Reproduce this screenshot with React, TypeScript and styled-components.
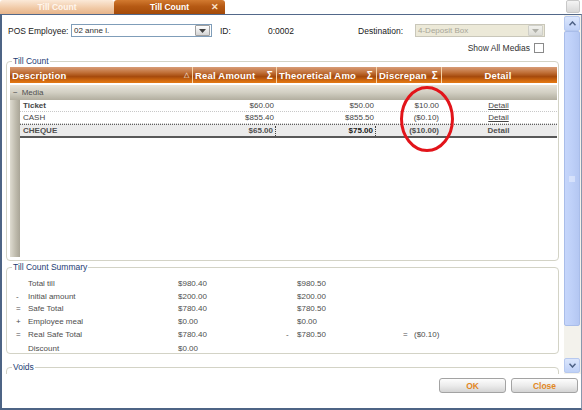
import React from "react";
import styled, { createGlobalStyle } from "styled-components";

const Global = createGlobalStyle`
  html, body {
    margin: 0;
    padding: 0;
    background: #ffffff;
    overflow: hidden;
  }
  body {
    font-family: "Liberation Sans", Tahoma, Arial, sans-serif;
    font-size: 8px;
    color: #303030;
  }
`;

const Page = styled.div`
  width: 582px;
  height: 410px;
  display: flex;
  flex-direction: column;
  background: #ffffff;
  position: relative;
`;

const TabBar = styled.div`
  height: 14px;
  display: flex;
  align-items: stretch;
  position: relative;
`;

interface TabProps {
  $active?: boolean;
}
const Tab = styled.div<TabProps>`
  width: ${(p) => (p.$active ? 111 : 114)}px;
  display: flex;
  align-items: center;
  justify-content: center;
  position: relative;
  color: ${(p) => (p.$active ? "#ffffff" : "#fff6ee")};
  font-weight: bold;
  font-size: 8.5px;
  border-radius: 3px 3px 0 0;
  background: ${(p) =>
    p.$active
      ? "linear-gradient(#d27a30 0%, #b65a14 45%, #a44a08 100%)"
      : "linear-gradient(#fbe9d8 0%, #f0c8a4 60%, #e7b48a 100%)"};
`;

const TabClose = styled.span`
  position: absolute;
  right: 6px;
  top: 2px;
  font-size: 9px;
  color: #fbe2c8;
`;

const CornerButton = styled.div`
  position: absolute;
  right: 2px;
  top: 0;
  width: 12px;
  height: 11px;
  border: 1px solid #c8c8c8;
  border-radius: 2px;
  background: linear-gradient(#f4f4f4, #d8d8d8);
`;

const Window = styled.div`
  flex: 1;
  display: flex;
  flex-direction: column;
  border-top: 1px solid #52688a;
  border-left: 2px solid #4d6485;
  border-right: 1px solid #8797ad;
  border-bottom: 2px solid #4d6485;
  min-height: 0;
`;

const Body = styled.div`
  height: 359px;
  display: flex;
`;

const Content = styled.div`
  flex: 1;
  overflow: hidden;
  display: flex;
  flex-direction: column;
`;

const TopRow = styled.div`
  margin-top: 9px;
  height: 15px;
  display: flex;
  align-items: center;
  padding-left: 6px;
`;

const Label = styled.span<{ $w?: number; $right?: boolean }>`
  width: ${(p) => (p.$w ? `${p.$w}px` : "auto")};
  text-align: ${(p) => (p.$right ? "right" : "left")};
  color: #202020;
  font-size: 8.5px;
  flex-shrink: 0;
`;

const Combo = styled.div<{ $w: number; $disabled?: boolean }>`
  width: ${(p) => p.$w}px;
  height: 13px;
  box-sizing: border-box;
  border: 1px solid ${(p) => (p.$disabled ? "#c9c7ba" : "#7f9db9")};
  background: ${(p) => (p.$disabled ? "#ece9d8" : "#ffffff")};
  color: ${(p) => (p.$disabled ? "#a8a698" : "#303030")};
  display: flex;
  align-items: center;
  justify-content: space-between;
  padding-left: 2px;
  padding-right: 1px;
  font-size: 8px;
  flex-shrink: 0;
`;

const ComboButton = styled.div<{ $disabled?: boolean }>`
  width: 13px;
  height: 9px;
  border: 1px solid ${(p) => (p.$disabled ? "#cfcfc8" : "#a0a0a0")};
  border-radius: 1px;
  background: ${(p) =>
    p.$disabled ? "linear-gradient(#f2f2ee, #dcdcd6)" : "linear-gradient(#ffffff, #d4d4d4)"};
  display: flex;
  align-items: center;
  justify-content: center;
`;

const CheckRow = styled.div`
  margin-top: 6px;
  height: 10px;
  display: flex;
  align-items: center;
  justify-content: flex-end;
  gap: 4px;
  padding-right: 20px;
  color: #303030;
  font-size: 8.5px;
`;

const CheckBox = styled.div`
  width: 8px;
  height: 8px;
  border: 1px solid #8a8a8a;
  background: #ffffff;
`;

const Group = styled.fieldset<{ $h: number; $mt: number }>`
  margin: ${(p) => p.$mt}px 5px 0 4px;
  padding: 0 1px 0 3px;
  height: ${(p) => p.$h}px;
  border: 1px solid #d3d3c6;
  border-radius: 4px;
  box-sizing: border-box;
  flex-shrink: 0;
  min-width: 0;
`;

const Legend = styled.legend`
  padding: 0 1px;
  margin-left: 2px;
  font-size: 8.5px;
  color: #1d3c74;
  line-height: 9px;
`;

const GridWrap = styled.div`
  position: relative;
  margin-top: 1px;
  display: flex;
  flex-direction: column;
  height: 190px;
`;

const COLS = "182px 84px 100px 65px 114px";

const HeaderRow = styled.div`
  display: grid;
  grid-template-columns: ${COLS};
  height: 16px;
  background: linear-gradient(#d89c76 0%, #c07038 35%, #a64a0c 60%, #d26a10 85%, #e47a14 100%);
`;

const HeaderCell = styled.div<{ $center?: boolean }>`
  display: flex;
  align-items: center;
  justify-content: ${(p) => (p.$center ? "center" : "space-between")};
  padding: 0 3px 0 2px;
  color: #ffffff;
  font-weight: bold;
  font-size: 9.5px;
  letter-spacing: 0.2px;
  white-space: nowrap;
  overflow: hidden;
  border-left: 1px solid #f6d4a8;
  &:first-child {
    border-left: none;
  }
`;

const SortMark = styled.span`
  font-size: 7px;
  font-weight: normal;
`;

const Sigma = styled.span`
  font-size: 10px;
  font-weight: bold;
`;

const GroupRow = styled.div`
  height: 15px;
  margin-top: 2px;
  display: flex;
  align-items: center;
  gap: 4px;
  padding-left: 3px;
  color: #505050;
  font-size: 8px;
  background: linear-gradient(#e8e5db 0%, #d2cfc3 50%, #b2ae9f 100%);
`;

const GridBody = styled.div`
  flex: 1;
  display: flex;
`;

const Strip = styled.div`
  width: 10px;
  background: linear-gradient(90deg, #dedbd0 0%, #bdb9ab 60%, #a9a597 100%);
`;

const Rows = styled.div`
  flex: 1;
  display: flex;
  flex-direction: column;
`;

const DataRow = styled.div<{ $total?: boolean }>`
  display: grid;
  grid-template-columns: 172px 84px 100px 65px 114px;
  height: 11px;
  align-items: center;
  font-size: 8px;
  font-weight: ${(p) => (p.$total ? "bold" : "normal")};
  color: ${(p) => (p.$total ? "#505050" : "#454545")};
  background: ${(p) => (p.$total ? "#ebebeb" : "#ffffff")};
  border-bottom: ${(p) => (p.$total ? "2px solid #585858" : "1px dotted #c8c8c8")};
  border-top: ${(p) => (p.$total ? "1px dotted #606060" : "none")};
`;

const Cell = styled.div<{ $align?: string; $sep?: boolean; $bold?: boolean }>`
  text-align: ${(p) => p.$align || "left"};
  padding: 0 2px 0 3px;
  white-space: nowrap;
  overflow: hidden;
  font-weight: ${(p) => (p.$bold ? "bold" : "inherit")};
  border-right: ${(p) => (p.$sep ? "1px dotted #404040" : "none")};
  line-height: 10px;
`;

const DetailLink = styled.span`
  text-decoration: underline;
`;

const Ellipse = styled.svg`
  position: absolute;
  left: 386px;
  top: 18px;
  pointer-events: none;
`;

const SummaryGrid = styled.div`
  display: grid;
  grid-template-columns: 12px 150px 108px 11px 106px 11px 80px;
  grid-template-rows: repeat(5, 12.8px) 15px;
  margin-top: 5px;
  padding-left: 6px;
  color: #4e4e4e;
  font-size: 8px;
  align-items: center;
`;

const Footer = styled.div`
  flex: 1;
  display: flex;
  justify-content: flex-end;
  align-items: flex-start;
  gap: 5px;
  padding: 4px 3px 0 0;
`;

const Button = styled.div`
  width: 67px;
  height: 15px;
  box-sizing: border-box;
  border: 1px solid #a3a3a3;
  border-radius: 3px;
  background: linear-gradient(#fdfdfd 0%, #ececec 50%, #d4d4d4 100%);
  display: flex;
  align-items: center;
  justify-content: center;
  color: #e2871f;
  font-weight: bold;
  font-size: 8.5px;
`;

const ScrollBar = styled.div`
  width: 17px;
  display: flex;
  flex-direction: column;
  padding: 1px 1px 1px 0;
  box-sizing: border-box;
  background: #f3f2ec;
`;

const ScrollBtn = styled.div`
  height: 15px;
  border: 1px solid #b7c9ef;
  border-radius: 2px;
  box-sizing: border-box;
  background: linear-gradient(#dbe6fc, #bfd1f7);
  display: flex;
  align-items: center;
  justify-content: center;
`;

const Thumb = styled.div`
  height: 295px;
  border: 1px solid #a9bde9;
  border-radius: 2px;
  box-sizing: border-box;
  background: linear-gradient(90deg, #c6d6fb, #bed0f8 50%, #b4c7f2);
  display: flex;
  align-items: center;
  justify-content: center;
`;

const Track = styled.div`
  flex: 1;
`;

const Arrow = ({ up }: { up?: boolean }) => (
  <svg width="7" height="5" viewBox="0 0 7 5">
    <path
      d={up ? "M0.5 4.2 L3.5 1 L6.5 4.2" : "M0.5 0.8 L3.5 4 L6.5 0.8"}
      fill="none"
      stroke="#4d6185"
      strokeWidth="1.5"
    />
  </svg>
);

const DownTri = ({ color }: { color: string }) => (
  <svg width="7" height="4" viewBox="0 0 7 4">
    <path d="M0 0 H7 L3.5 4 Z" fill={color} />
  </svg>
);

const summary = [
  ["", "Total till", "$980.40", "", "$980.50", "", ""],
  ["-", "Initial amount", "$200.00", "", "$200.00", "", ""],
  ["=", "Safe Total", "$780.40", "", "$780.50", "", ""],
  ["+", "Employee meal", "$0.00", "", "$0.00", "", ""],
  ["=", "Real Safe Total", "$780.40", "-", "$780.50", "=", "($0.10)"],
  ["", "Discount", "$0.00", "", "", "", ""],
];

const rows = [
  { d: "Ticket", r: "$60.00", t: "$50.00", x: "$10.00", bold: true },
  { d: "CASH", r: "$855.40", t: "$855.50", x: "($0.10)", bold: false },
];

export default function App() {
  return (
    <Page>
      <Global />
      <TabBar>
        <Tab>Till Count</Tab>
        <Tab $active>
          Till Count
          <TabClose>✕</TabClose>
        </Tab>
        <CornerButton />
      </TabBar>
      <Window>
        <Body>
          <Content>
            <TopRow>
              <Label $w={63}>POS Employee:</Label>
              <Combo $w={141}>
                02 anne l.
                <ComboButton>
                  <DownTri color="#404040" />
                </ComboButton>
              </Combo>
              <Label $w={48} style={{ paddingLeft: 8 }}>
                ID:
              </Label>
              <Label $w={70}>0:0002</Label>
              <Label $w={65} $right>
                Destination:
              </Label>
              <Combo $w={130} $disabled style={{ marginLeft: 12 }}>
                4-Deposit Box
                <ComboButton $disabled>
                  <DownTri color="#b0b0a8" />
                </ComboButton>
              </Combo>
            </TopRow>
            <CheckRow>
              Show All Medias
              <CheckBox />
            </CheckRow>

            <Group $h={204} $mt={4}>
              <Legend>Till Count</Legend>
              <GridWrap>
                <HeaderRow>
                  <HeaderCell>
                    Description<SortMark>△</SortMark>
                  </HeaderCell>
                  <HeaderCell>
                    Real Amount<Sigma>Σ</Sigma>
                  </HeaderCell>
                  <HeaderCell>
                    Theoretical Amo<Sigma>Σ</Sigma>
                  </HeaderCell>
                  <HeaderCell>
                    Discrepan<Sigma>Σ</Sigma>
                  </HeaderCell>
                  <HeaderCell $center>Detail</HeaderCell>
                </HeaderRow>
                <GroupRow>
                  <span>−</span>
                  <span>Media</span>
                </GroupRow>
                <GridBody>
                  <Strip />
                  <Rows>
                    {rows.map((r) => (
                      <DataRow key={r.d}>
                        <Cell $bold={r.bold}>{r.d}</Cell>
                        <Cell $align="right">{r.r}</Cell>
                        <Cell $align="right">{r.t}</Cell>
                        <Cell $align="right">{r.x}</Cell>
                        <Cell $align="center">
                          <DetailLink>Detail</DetailLink>
                        </Cell>
                      </DataRow>
                    ))}
                    <DataRow $total>
                      <Cell>CHEQUE</Cell>
                      <Cell $align="right" $sep>
                        $65.00
                      </Cell>
                      <Cell $align="right" $sep style={{ color: "#202020" }}>
                        $75.00
                      </Cell>
                      <Cell $align="right">($10.00)</Cell>
                      <Cell $align="center">Detail</Cell>
                    </DataRow>
                  </Rows>
                </GridBody>
                <Ellipse width="62" height="68" viewBox="0 0 62 68">
                  <ellipse cx="31" cy="34" rx="25.5" ry="31.5" fill="none" stroke="#e2141a" strokeWidth="3" />
                </Ellipse>
              </GridWrap>
            </Group>

            <Group $h={91} $mt={2}>
              <Legend>Till Count Summary</Legend>
              <SummaryGrid>
                {summary.map((row, i) =>
                  row.map((c, j) => <span key={`${i}-${j}`}>{c}</span>)
                )}
              </SummaryGrid>
            </Group>

            <Group $h={40} $mt={9}>
              <Legend>Voids</Legend>
            </Group>
          </Content>
          <ScrollBar>
            <ScrollBtn>
              <Arrow up />
            </ScrollBtn>
            <Thumb>
              <svg width="6" height="6" viewBox="0 0 6 6">
                <path d="M0 1 H6 M0 3 H6 M0 5 H6" stroke="#eef3ff" strokeWidth="1" />
              </svg>
            </Thumb>
            <Track />
            <ScrollBtn>
              <Arrow />
            </ScrollBtn>
          </ScrollBar>
        </Body>
        <Footer>
          <Button>OK</Button>
          <Button>Close</Button>
        </Footer>
      </Window>
    </Page>
  );
}
